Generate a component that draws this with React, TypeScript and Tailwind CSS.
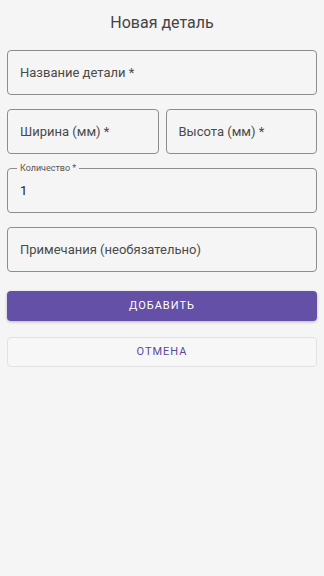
import React from "react";

function Field({ label, className = "" }: { label: string; className?: string }) {
  return (
    <div
      className={`h-[45px] rounded-[4px] border border-[#8d8d8d] flex items-center px-[12px] text-[13px] text-[#4a4a4a] ${className}`}
    >
      {label}
    </div>
  );
}

export default function App() {
  return (
    <div
      className="min-h-[576px] w-full bg-[#f5f5f5] px-[7px]"
      style={{ fontFamily: "Roboto, 'Noto Sans', sans-serif" }}
    >
      <div className="pt-[13px] h-[50px] text-center text-[16px] leading-[20px] text-[#444]">
        Новая деталь
      </div>

      <div className="flex flex-col gap-[14px]">
        <Field label="Название детали *" />

        <div className="flex gap-[7px]">
          <Field label="Ширина (мм) *" className="flex-1" />
          <Field label="Высота (мм) *" className="flex-1" />
        </div>

        <div className="relative h-[45px] rounded-[4px] border border-[#8d8d8d] flex items-center px-[12px] text-[13px] text-[#222]">
          <span className="absolute left-[9px] top-[-7px] bg-[#f5f5f5] px-[3px] text-[9px] leading-[12px] text-[#555]">
            Количество *
          </span>
          1
        </div>

        <Field label="Примечания (необязательно)" />
      </div>

      <button className="mt-[19px] w-full h-[30px] rounded-[4px] bg-[#6450a6] text-white text-[11px] tracking-[1px] shadow-[0_1px_3px_rgba(0,0,0,0.25)]">
        ДОБАВИТЬ
      </button>

      <button className="mt-[16px] w-full h-[30px] rounded-[4px] border border-[#e2e2e2] bg-[#f7f7f7] text-[#5a4a9a] text-[11px] tracking-[1px]">
        ОТМЕНА
      </button>
    </div>
  );
}
